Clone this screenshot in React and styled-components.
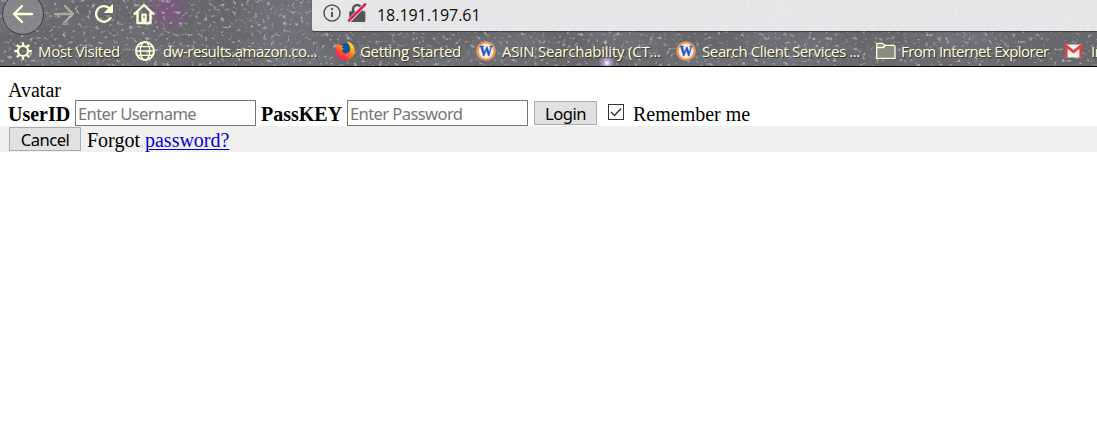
import React from "react";
import styled, { createGlobalStyle } from "styled-components";

const GlobalStyle = createGlobalStyle`
  body { margin: 0; background: #fff; overflow: hidden; }
  *, *::before, *::after { box-sizing: border-box; }
`;

const Page = styled.div`
  width: 100%;
  height: 428px;
  overflow: hidden;
`;

const Chrome = styled.header`
  display: grid;
  grid-template: 67px / 100%;
  border-bottom: 1px solid #000;
  height: 67px;
  overflow: hidden;
  background: #68686c;
  color: #ffffd6;
`;

const Starfield = styled.svg`
  grid-area: 1 / 1;
  width: 100%;
  height: 67px;
`;

const Bars = styled.div`
  grid-area: 1 / 1;
  z-index: 1;
  min-width: 0;
`;

const NavBar = styled.div`
  display: flex;
  height: 32px;
`;

const NavButtons = styled.div`
  display: flex;
  flex: none;
  width: 312px;
  height: 27px;
  padding-left: 2px;
  align-items: center;
`;

const BackButton = styled.div`
  display: flex;
  flex: none;
  width: 42px;
  height: 42px;
  align-items: center;
  justify-content: center;
  border: 1px solid #3d3d40;
  border-radius: 50%;
  background: rgba(139, 137, 141, 0.85);
`;

const NavIcon = styled.svg`
  flex: none;
  width: 22px;
  height: 22px;
  margin-left: ${(p) => p.$gap || 0}px;
  opacity: ${(p) => (p.$dim ? 0.42 : 1)};
  fill: none;
  stroke: #ffffd6;
  stroke-width: 2.4;
  stroke-linecap: round;
  stroke-linejoin: round;
`;

const AddressBar = styled.div`
  display: flex;
  flex: 1;
  height: 31px;
  padding-left: 11px;
  align-items: center;
  background: rgba(238, 238, 240, 0.94);
  border-radius: 0 0 0 2px;
  box-shadow: 0 1px 1px rgba(40, 40, 44, 0.7);
`;

const SiteIcon = styled.svg`
  flex: none;
  width: ${(p) => p.$size}px;
  height: ${(p) => p.$size}px;
  margin: 0 ${(p) => p.$gap}px 5px 0;
`;

const Url = styled.span`
  margin-bottom: 1px;
  color: #0c0c0d;
  font: 16px/28px "Open Sans", "Noto Sans", sans-serif;
  letter-spacing: -0.04px;
`;

const BookmarkBar = styled.nav`
  display: flex;
  height: 34px;
  padding: 4px 0 0 13px;
  overflow: hidden;
`;

const Bookmark = styled.div`
  display: flex;
  flex: none;
  width: ${(p) => p.$width}px;
  height: 30px;
  align-items: center;
`;

const BookmarkIcon = styled.svg`
  flex: none;
  width: 20px;
  height: 20px;
  margin-right: ${(p) => p.$gap}px;
  overflow: visible;
`;

const BookmarkLabel = styled.span`
  font: 15px/28px "Open Sans", "Noto Sans", sans-serif;
  letter-spacing: ${(p) => p.$spacing}px;
  white-space: nowrap;
  text-shadow: 1px 1px 1px #333;
`;

const Main = styled.main`
  padding-top: 11px;
  color: #000;
  font: 20px/24px "Liberation Serif", "Times New Roman", serif;
`;

const Avatar = styled.div`
  height: 22px;
  padding-left: 8px;
  line-height: 24px;
`;

const FormRow = styled.div`
  display: flex;
  height: 26px;
  padding-left: 8px;
  align-items: center;
`;

const FooterRow = styled(FormRow)`
  background: #f0f0f0;
`;

const FieldLabel = styled.label`
  flex: none;
  width: ${(p) => p.$width}px;
  padding-top: 2px;
  font-weight: bold;
  white-space: nowrap;
`;

const Field = styled.input`
  flex: none;
  width: 181px;
  height: 26px;
  margin: 0 5px 0 0;
  padding: 0 2px;
  border: 1px solid #767676;
  border-radius: 0;
  background: #fff;
  font: 16.6px "Noto Sans", sans-serif;
  letter-spacing: -0.62px;
  outline: none;
  &::placeholder { color: #777; opacity: 1; }
`;

const Button = styled.button`
  flex: none;
  width: ${(p) => p.$width}px;
  height: 24px;
  margin: 0 0 0 1px;
  padding: 1px 0 0;
  border: 1px solid #adadad;
  border-radius: 0;
  background: #e1e1e1;
  color: #000;
  font: 16.6px/20px "Noto Sans", sans-serif;
  letter-spacing: -0.5px;
`;

const CheckLabel = styled.label`
  display: flex;
  align-items: center;
  margin-left: 11px;
  gap: 9px;
  padding-top: 2px;
`;

const Checkbox = styled.svg`
  width: 16px;
  height: 16px;
  margin-bottom: 4px;
  fill: #fff;
  stroke: #333;
`;

const Forgot = styled.span`
  margin-left: 6px;
  padding-top: 2px;
  a { color: #0000d8; text-decoration: underline; text-decoration-thickness: 1px; text-underline-offset: 2px; }
`;

const Gear = () => (
  <BookmarkIcon $gap={5} viewBox="0 0 20 20" fill="none" stroke="#ffffd6">
    <circle cx="10" cy="10" r="5" strokeWidth="2.2" />
    {[0, 45, 90, 135, 180, 225, 270, 315].map((a) => (
      <path key={a} d="M10 4.5V1.3" strokeWidth="2.3" transform={`rotate(${a} 10 10)`} />
    ))}
  </BookmarkIcon>
);

const Globe = () => (
  <BookmarkIcon $gap={8} viewBox="0 0 20 20" fill="none" stroke="#ffffd6" strokeWidth="1.4">
    <circle cx="10" cy="10" r="9" strokeWidth="2" />
    <ellipse cx="10" cy="10" rx="4.7" ry="9" />
    <path d="M1.5 10h17M3 5.6h14M3 14.4h14" />
  </BookmarkIcon>
);

const Firefox = () => (
  <BookmarkIcon $gap={5} viewBox="0 0 20 20">
    <defs>
      <linearGradient id="fox" x1="0.9" y1="0" x2="0.2" y2="1">
        <stop offset="0" stopColor="#fff44f" />
        <stop offset="0.4" stopColor="#ff980e" />
        <stop offset="0.75" stopColor="#ff3647" />
        <stop offset="1" stopColor="#e31587" />
      </linearGradient>
    </defs>
    <circle cx="10.5" cy="9.5" r="7.5" fill="#18529c" />
    <path
      fill="url(#fox)"
      d="M3 2.2 5 4.2 8.2 4.4 6.8 6.8 9 8 6.8 9.5Q8 13 11.5 12.4 15.8 11.6 15 6.5 14.4 3 11.6.6 18 1.5 19.5 8 20.2 14.5 15.3 18 10 21.4 4.3 17.4-1 13 1 6.2Z"
    />
  </BookmarkIcon>
);

const WikiIcon = () => (
  <BookmarkIcon $gap={6} viewBox="0 0 20 20">
    <circle cx="10" cy="10" r="9.8" fill="#e99a58" />
    <circle cx="10" cy="10" r="7.4" fill="#ffeeda" />
    <text x="10" y="15" textAnchor="middle" fill="#1457d9" stroke="#1457d9" strokeWidth=".4" fontFamily="Liberation Serif, serif" fontWeight="bold" fontSize="15" textLength="13" lengthAdjust="spacingAndGlyphs">W</text>
  </BookmarkIcon>
);

const Folder = () => (
  <BookmarkIcon $gap={5} viewBox="0 0 20 20" stroke="#ffffd6" strokeWidth="1.3" fill="#8b8b85">
    <path d="M.7 17.3V3.6Q.7 2.3 2 2.3h4.5l2 2h9.2q1.3 0 1.3 1.3v11.7Z" />
    <path d="M.7 6.5h6.8l1.8-2.2" fill="none" />
  </BookmarkIcon>
);

const Gmail = () => (
  <BookmarkIcon $gap={7} viewBox="0 0 20 20">
    <path d="M1 3.5h17v13H1Z" fill="#f4eeee" />
    <path d="M2.2 16.5V5L9.5 10.8 16.8 5v11.5" fill="none" stroke="#d84440" strokeWidth="2.8" />
  </BookmarkIcon>
);

const bookmarks = [
  { label: "Most Visited", Icon: Gear, width: 122, spacing: -0.3 },
  { label: "dw-results.amazon.co...", Icon: Globe, width: 200, spacing: -0.46 },
  { label: "Getting Started", Icon: Firefox, width: 141, spacing: -0.35 },
  { label: "ASIN Searchability (CT...", Icon: WikiIcon, width: 200, spacing: -0.22 },
  { label: "Search Client Services ...", Icon: WikiIcon, width: 200, spacing: -0.38 },
  { label: "From Internet Explorer", Icon: Folder, width: 188, spacing: -0.55 },
  { label: "Inbox", Icon: Gmail, width: 80, spacing: -0.35 },
];

function Stars() {
  return (
    <Starfield aria-hidden="true">
      <defs>
        <filter id="dust" x="0" y="0" width="100%" height="100%">
          <feTurbulence type="fractalNoise" baseFrequency="0.24 0.27" numOctaves="3" seed="8" />
          <feColorMatrix values="0 0 0 0 .74  0 0 0 0 .74  0 0 0 0 .76  4 1.2 0 0 -3" />
          <feGaussianBlur stdDeviation="0.55" />
        </filter>
        <filter id="clouds" x="0" y="0" width="100%" height="100%">
          <feTurbulence type="fractalNoise" baseFrequency="0.012 0.03" numOctaves="2" seed="4" />
          <feColorMatrix values="0 0 0 0 .25  0 0 0 0 .25  0 0 0 0 .34  2 0 0 0 -.85" />
        </filter>
        <radialGradient id="violet">
          <stop offset="0" stopColor="#84508a" stopOpacity=".8" />
          <stop offset="1" stopColor="#84508a" stopOpacity="0" />
        </radialGradient>
        <radialGradient id="glow">
          <stop offset="0" stopColor="#fff" />
          <stop offset=".3" stopColor="#cfb5f0" stopOpacity=".9" />
          <stop offset="1" stopColor="#9478c0" stopOpacity="0" />
        </radialGradient>
      </defs>
      <rect width="100%" height="67" filter="url(#clouds)" opacity=".45" />
      <ellipse cx="167" cy="10" rx="26" ry="24" fill="url(#violet)" />
      <rect width="100%" height="67" filter="url(#dust)" opacity=".6" />
      <circle cx="607" cy="63" r="9" fill="url(#glow)" />
    </Starfield>
  );
}

export default function App() {
  return (
    <Page>
      <GlobalStyle />
      <Chrome>
        <Stars />
        <Bars>
          <NavBar>
            <NavButtons>
              <BackButton>
                <NavIcon viewBox="0 0 22 22"><path d="M20 11H2M10 3 2 11l8 8" /></NavIcon>
              </BackButton>
              <NavIcon $gap={9} $dim viewBox="0 0 22 22"><path d="M2 11h18M12 3l8 8-8 8" /></NavIcon>
              <NavIcon $gap={18} viewBox="0 0 22 22">
                <path d="M17.5 15A7.8 7.8 0 1 1 16.5 5.5" />
                <path d="M19.5 2v7.5H12Z" fill="#ffffd6" strokeWidth="1" />
              </NavIcon>
              <NavIcon $gap={18} viewBox="0 0 22 22">
                <path d="M1.5 11 11 2l9.5 9M4.5 10v10h13V10" />
                <path d="M8.8 18v-7h4.4v7Z" fill="#ffffd6" strokeWidth="1" />
                <path d="M11 13v1.5" stroke="#65656a" strokeWidth="1.2" />
              </NavIcon>
            </NavButtons>
            <AddressBar>
              <SiteIcon $size={18} $gap={6} viewBox="0 0 18 18" fill="none" stroke="#555">
                <circle cx="9" cy="9" r="8" strokeWidth="1.5" />
                <path d="M9 8v5" strokeWidth="2" />
                <circle cx="9" cy="5" r="1.2" fill="#555" stroke="none" />
              </SiteIcon>
              <SiteIcon $size={20} $gap={10} viewBox="0 0 18 18" fill="none">
                <path d="M5.5 8V5.5a3.7 3.7 0 0 1 7.4 0V8" stroke="#555" strokeWidth="2.3" />
                <rect x="2" y="7.5" width="14.5" height="9.5" rx="1" fill="#555" />
                <path d="m1 17 16-16.5" stroke="#e8eaec" strokeWidth="3.4" />
                <path d="m1 16.5 16-16" stroke="#e21b4c" strokeWidth="2.2" />
              </SiteIcon>
              <Url>18.191.197.61</Url>
            </AddressBar>
          </NavBar>
          <BookmarkBar>
            {bookmarks.map(({ label, Icon, width, spacing }) => (
              <Bookmark key={label} $width={width}>
                <Icon />
                <BookmarkLabel $spacing={spacing}>{label}</BookmarkLabel>
              </Bookmark>
            ))}
          </BookmarkBar>
        </Bars>
      </Chrome>
      <Main>
        <Avatar>Avatar</Avatar>
        <FormRow>
          <FieldLabel $width={67}>UserID</FieldLabel>
          <Field placeholder="Enter Username" />
          <FieldLabel $width={86}>PassKEY</FieldLabel>
          <Field type="password" placeholder="Enter Password" />
          <Button $width={63}>Login</Button>
          <CheckLabel>
            <Checkbox viewBox="0 0 16 16">
              <rect x=".5" y=".5" width="15" height="15" />
              <path d="m3 8 3.5 3.5L13 4.5" fill="none" strokeWidth="1.4" />
            </Checkbox>
            Remember me
          </CheckLabel>
        </FormRow>
        <FooterRow>
          <Button $width={72}>Cancel</Button>
          <Forgot>Forgot <a href="#password">password?</a></Forgot>
        </FooterRow>
      </Main>
    </Page>
  );
}
